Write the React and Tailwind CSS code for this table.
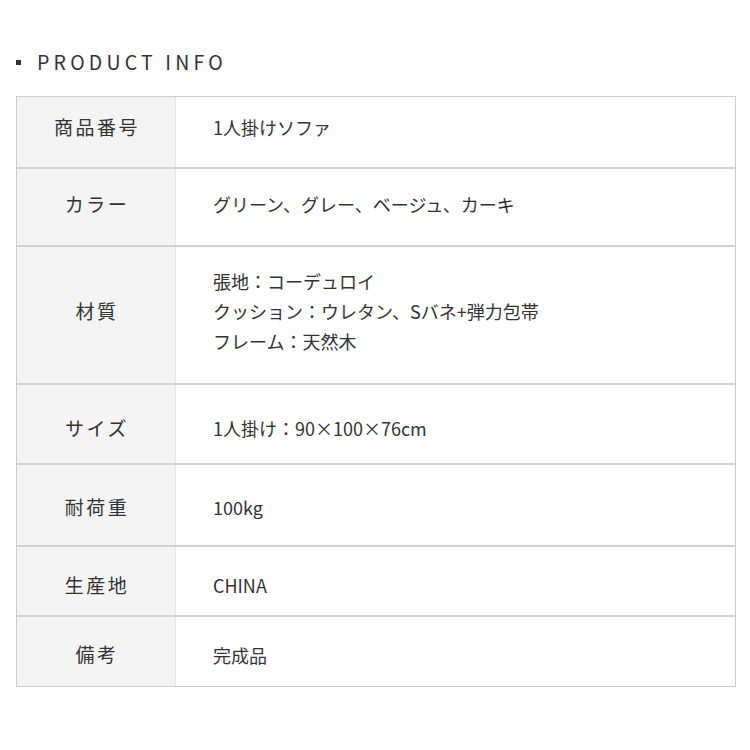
const rows = [
  { label: '商品番号', value: ['1人掛けソファ'], h: 'h-[70px] pb-[10px]' },
  { label: 'カラー', value: ['グリーン、グレー、ベージュ、カーキ'], h: 'h-[76px] pb-[6px]' },
  { label: '材質', value: ['張地：コーデュロイ', 'クッション：ウレタン、Sバネ+弾力包帯', 'フレーム：天然木'], h: 'h-[136px] pb-[8px]' },
  { label: 'サイズ', value: ['1人掛け：90×100×76cm'], h: 'h-[78px] pt-[8px]' },
  { label: '耐荷重', value: ['100kg'], h: 'h-[80px] pt-[4px]' },
  { label: '生産地', value: ['CHINA'], h: 'h-[68px] pt-[8px]' },
  { label: '備考', value: ['完成品'], h: 'h-[69px] pt-[6px]' },
]

export default function App() {
  return (
    <div
      className="w-[750px] h-[750px] bg-white text-[#333] pt-[50px]"
      style={{ fontFamily: '"Noto Sans CJK JP", "Noto Sans", sans-serif' }}
    >
      <div className="flex items-center pl-[16px] h-[24px]">
        <span className="w-[5px] h-[5px] bg-[#333]" />
        <h2 className="ml-[16px] text-[19.5px] tracking-[4.2px] text-[#333] leading-none">PRODUCT INFO</h2>
      </div>

      <div className="mx-[16px] mt-[22px] w-[720px] border border-[#cccccc]">
        {rows.map((r, i) => (
          <div
            key={r.label}
            className={`flex ${i < rows.length - 1 ? 'border-b-2 border-[#d2d2d2]' : ''}`}
          >
            <div className={`w-[159px] shrink-0 bg-[#f4f4f4] border-r border-[#e6e6e6] flex items-center justify-center pl-[2px] text-[19px] text-[#333] tracking-[2.5px] ${r.h}`}>
              {r.label}
            </div>
            <div className={`flex-1 flex flex-col justify-center pl-[37px] text-[18px] leading-[30px] text-[#333] ${r.h}`}>
              {r.value.map((v) => (
                <div key={v}>{v}</div>
              ))}
            </div>
          </div>
        ))}
      </div>
    </div>
  )
}
